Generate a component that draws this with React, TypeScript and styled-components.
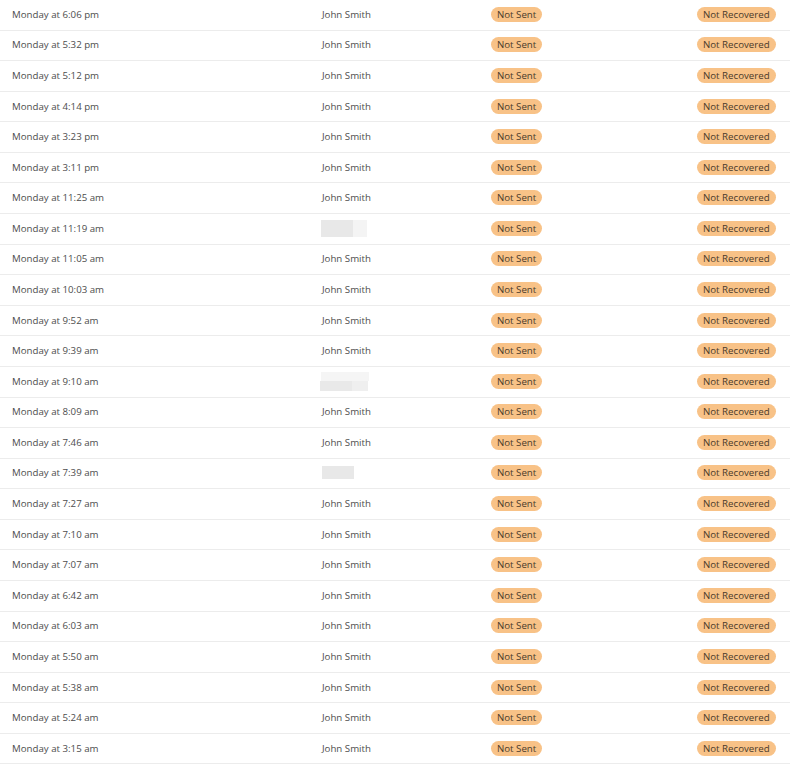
import React from "react";
import styled, { createGlobalStyle } from "styled-components";

type Entry = {
  time: string;
  name?: string;
  redact?: "wide" | "stacked" | "short";
};

const entries: Entry[] = [
  { time: "Monday at 6:06 pm", name: "John Smith" },
  { time: "Monday at 5:32 pm", name: "John Smith" },
  { time: "Monday at 5:12 pm", name: "John Smith" },
  { time: "Monday at 4:14 pm", name: "John Smith" },
  { time: "Monday at 3:23 pm", name: "John Smith" },
  { time: "Monday at 3:11 pm", name: "John Smith" },
  { time: "Monday at 11:25 am", name: "John Smith" },
  { time: "Monday at 11:19 am", redact: "wide" },
  { time: "Monday at 11:05 am", name: "John Smith" },
  { time: "Monday at 10:03 am", name: "John Smith" },
  { time: "Monday at 9:52 am", name: "John Smith" },
  { time: "Monday at 9:39 am", name: "John Smith" },
  { time: "Monday at 9:10 am", redact: "stacked" },
  { time: "Monday at 8:09 am", name: "John Smith" },
  { time: "Monday at 7:46 am", name: "John Smith" },
  { time: "Monday at 7:39 am", redact: "short" },
  { time: "Monday at 7:27 am", name: "John Smith" },
  { time: "Monday at 7:10 am", name: "John Smith" },
  { time: "Monday at 7:07 am", name: "John Smith" },
  { time: "Monday at 6:42 am", name: "John Smith" },
  { time: "Monday at 6:03 am", name: "John Smith" },
  { time: "Monday at 5:50 am", name: "John Smith" },
  { time: "Monday at 5:38 am", name: "John Smith" },
  { time: "Monday at 5:24 am", name: "John Smith" },
  { time: "Monday at 3:15 am", name: "John Smith" },
];

function Redacted({ variant }: { variant: "wide" | "stacked" | "short" }) {
  if (variant === "stacked") {
    return (
      <RedactStack>
        <Blur $w={48} $h={9} $tone="#f5f5f5" />
        <RedactLine>
          <Blur $w={32} $h={10} $tone="#e9e9e9" />
          <Blur $w={16} $h={10} $tone="#efefef" />
        </RedactLine>
      </RedactStack>
    );
  }
  if (variant === "wide") {
    return (
      <RedactLine>
        <Blur $w={32} $h={17} $tone="#e8e8e8" />
        <Blur $w={14} $h={17} $tone="#f4f4f4" />
      </RedactLine>
    );
  }
  return <Blur $w={32} $h={13} $tone="#e8e8e8" />;
}

export default function App() {
  return (
    <>
      <GlobalStyle />
      <Table>
        {entries.map((e, i) => (
          <Row key={i}>
            <Cell>{e.time}</Cell>
            <Cell>{e.redact ? <Redacted variant={e.redact} /> : e.name}</Cell>
            <Cell>
              <Badge>Not Sent</Badge>
            </Cell>
            <Cell>
              <Badge>Not Recovered</Badge>
            </Cell>
          </Row>
        ))}
      </Table>
    </>
  );
}

const GlobalStyle = createGlobalStyle`
  html, body {
    margin: 0;
    padding: 0;
    background: #ffffff;
  }
  body {
    font-family: "Open Sans", "Noto Sans", sans-serif;
  }
`;

const Table = styled.div`
  width: 790px;
  display: flex;
  flex-direction: column;
`;

const Row = styled.div`
  box-sizing: border-box;
  height: 30.58px;
  padding-bottom: 1px;
  display: grid;
  grid-template-columns: 310px 169px 206px 1fr;
  align-items: center;
  padding-left: 12px;
  border-bottom: 1px solid #ececec;
`;

const Cell = styled.div`
  font-size: 9.7px;
  color: #4d4d4d;
  white-space: nowrap;
  display: flex;
  align-items: center;
`;

const Badge = styled.span`
  display: inline-block;
  background: #f8c287;
  color: #4a3a2a;
  font-size: 9.7px;
  line-height: 15px;
  padding: 0 6px;
  border-radius: 8px;
`;

const RedactLine = styled.div`
  display: flex;
  margin-left: -1px;
`;

const RedactStack = styled.div`
  display: flex;
  flex-direction: column;
  margin-left: -1px;
`;

const Blur = styled.div<{ $w: number; $h: number; $tone: string }>`
  width: ${(p) => p.$w}px;
  height: ${(p) => p.$h}px;
  background: ${(p) => p.$tone};
`;
